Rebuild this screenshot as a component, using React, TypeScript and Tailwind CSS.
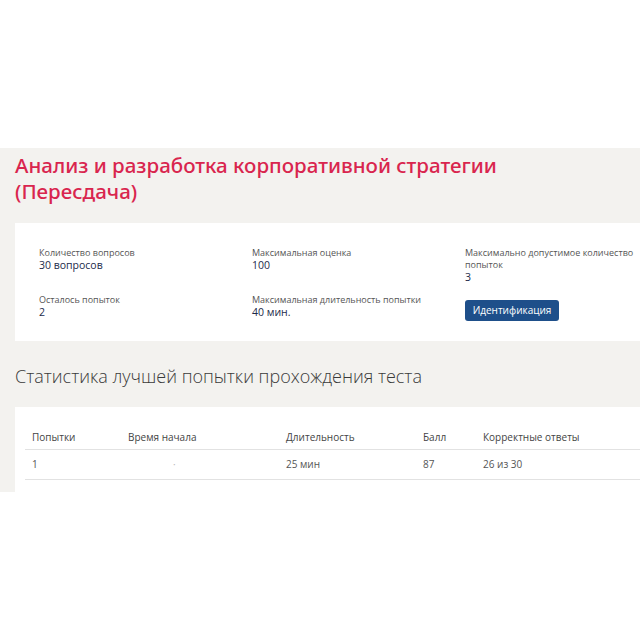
import React from "react";

// ===== Data =====
const row1 = [
  { label: "Количество вопросов", value: "30 вопросов" },
  { label: "Максимальная оценка", value: "100" },
  { label: "Максимально допустимое количество\nпопыток", value: "3" },
];
const row2 = [
  { label: "Осталось попыток", value: "2" },
  { label: "Максимальная длительность попытки", value: "40 мин." },
];

const attempts = [
  { n: "1", start: "·", dur: "25 мин", score: "87", correct: "26 из 30" },
];

function Field({ label, value }: { label: string; value: string }) {
  return (
    <div>
      <div className="text-[9px] leading-[12px] text-[#555] whitespace-pre">{label}</div>
      <div className="text-[10.5px] leading-[13px] text-[#1c2a4a]">{value}</div>
    </div>
  );
}

export default function App() {
  return (
    <div className="w-[640px] h-[640px] overflow-hidden bg-white font-['Open_Sans',sans-serif]">
      <div className="h-[148px]" />

      <main className="bg-[#f3f2ef] h-[344px] pl-[15px] overflow-hidden">
        {/* ===== Title ===== */}
        <h1 className="pt-[4px] text-[20.5px] leading-[26px] font-medium text-[#d9254e] font-['Noto_Sans',sans-serif]">
          Анализ и разработка корпоративной стратегии
          <br />
          (Пересдача)
        </h1>

        {/* ===== Info card ===== */}
        <section className="mt-[19px] bg-white h-[118px] pl-[24px] pt-[24px]">
          <div className="grid grid-cols-[213px_213px_1fr] h-[47px]">
            {row1.map((i) => (
              <Field key={i.label} {...i} />
            ))}
          </div>
          <div className="grid grid-cols-[213px_213px_1fr]">
            {row2.map((i) => (
              <Field key={i.label} {...i} />
            ))}
            <div className="pt-[2px]">
              <button className="w-[94px] h-[21px] rounded-[3px] bg-[#1e4f8a] text-white text-[10px] leading-[21px]">
                Идентификация
              </button>
            </div>
          </div>
        </section>

        {/* ===== Stats ===== */}
        <h2 className="mt-[23px] text-[18px] leading-[24px] text-[#3a3a3a] font-light">
          Статистика лучшей попытки прохождения теста
        </h2>

        <section className="mt-[19px] bg-white h-[100px] pl-[10px] pt-[20px]">
          <table className="w-full border-collapse text-[10px] text-[#444]">
            <thead>
              <tr className="border-b border-[#e2e2e2] text-left">
                <th className="font-normal w-[103px] pl-[7px] h-[22px]">Попытки</th>
                <th className="font-normal w-[158px]">Время начала</th>
                <th className="font-normal w-[137px]">Длительность</th>
                <th className="font-normal w-[60px]">Балл</th>
                <th className="font-normal">Корректные ответы</th>
              </tr>
            </thead>
            <tbody>
              {attempts.map((a) => (
                <tr key={a.n} className="border-b border-[#e2e2e2] text-[#555]">
                  <td className="pl-[7px] h-[30px]">{a.n}</td>
                  <td className="pl-[45px] text-[#bbb]">{a.start}</td>
                  <td>{a.dur}</td>
                  <td>{a.score}</td>
                  <td>{a.correct}</td>
                </tr>
              ))}
            </tbody>
          </table>
        </section>
      </main>
    </div>
  );
}
